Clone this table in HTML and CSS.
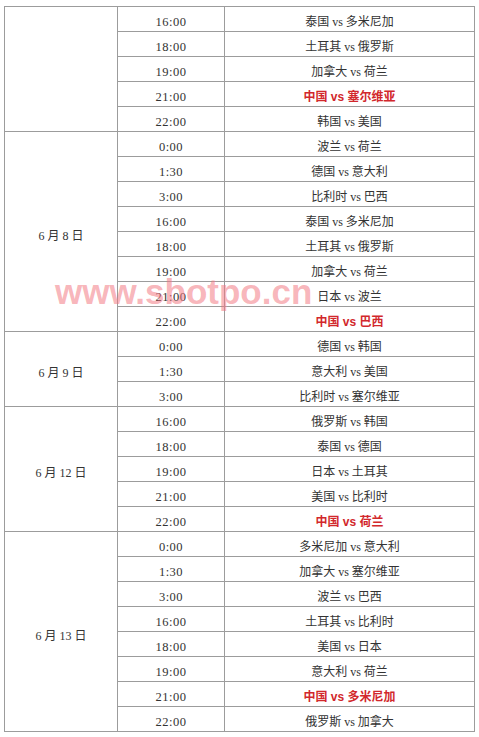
FILE: index.html
```html
<!DOCTYPE html>
<html lang="zh">
<head>
<meta charset="utf-8">
<link rel="stylesheet" href="styles.css">
</head>
<body>
<div class="wrap">
<table class="sched">
<colgroup><col class="c-date"><col class="c-time"><col class="c-match"></colgroup>
<tbody>
<tr><td class="date" rowspan="5"></td><td class="time">16:00</td><td class="match">泰国 vs 多米尼加</td></tr>
<tr><td class="time">18:00</td><td class="match">土耳其 vs 俄罗斯</td></tr>
<tr><td class="time">19:00</td><td class="match">加拿大 vs 荷兰</td></tr>
<tr><td class="time">21:00</td><td class="match hl">中国 vs 塞尔维亚</td></tr>
<tr><td class="time">22:00</td><td class="match">韩国 vs 美国</td></tr>

<tr><td class="date" rowspan="8">6 月 8 日</td><td class="time">0:00</td><td class="match">波兰 vs 荷兰</td></tr>
<tr><td class="time">1:30</td><td class="match">德国 vs 意大利</td></tr>
<tr><td class="time">3:00</td><td class="match">比利时 vs 巴西</td></tr>
<tr><td class="time">16:00</td><td class="match">泰国 vs 多米尼加</td></tr>
<tr><td class="time">18:00</td><td class="match">土耳其 vs 俄罗斯</td></tr>
<tr><td class="time">19:00</td><td class="match">加拿大 vs 荷兰</td></tr>
<tr><td class="time">21:00</td><td class="match">日本 vs 波兰</td></tr>
<tr><td class="time">22:00</td><td class="match hl">中国 vs 巴西</td></tr>

<tr><td class="date" rowspan="3">6 月 9 日</td><td class="time">0:00</td><td class="match">德国 vs 韩国</td></tr>
<tr><td class="time">1:30</td><td class="match">意大利 vs 美国</td></tr>
<tr><td class="time">3:00</td><td class="match">比利时 vs 塞尔维亚</td></tr>

<tr><td class="date" rowspan="5">6 月 12 日</td><td class="time">16:00</td><td class="match">俄罗斯 vs 韩国</td></tr>
<tr><td class="time">18:00</td><td class="match">泰国 vs 德国</td></tr>
<tr><td class="time">19:00</td><td class="match">日本 vs 土耳其</td></tr>
<tr><td class="time">21:00</td><td class="match">美国 vs 比利时</td></tr>
<tr><td class="time">22:00</td><td class="match hl">中国 vs 荷兰</td></tr>

<tr><td class="date" rowspan="8">6 月 13 日</td><td class="time">0:00</td><td class="match">多米尼加 vs 意大利</td></tr>
<tr><td class="time">1:30</td><td class="match">加拿大 vs 塞尔维亚</td></tr>
<tr><td class="time">3:00</td><td class="match">波兰 vs 巴西</td></tr>
<tr><td class="time">16:00</td><td class="match">土耳其 vs 比利时</td></tr>
<tr><td class="time">18:00</td><td class="match">美国 vs 日本</td></tr>
<tr><td class="time">19:00</td><td class="match">意大利 vs 荷兰</td></tr>
<tr><td class="time">21:00</td><td class="match hl">中国 vs 多米尼加</td></tr>
<tr><td class="time">22:00</td><td class="match">俄罗斯 vs 加拿大</td></tr>
</tbody>
</table>
<div class="watermark">www.sbotpo.cn</div>
</div>
</body>
</html>
```
FILE: styles.css
```css
html, body {
  margin: 0;
  padding: 0;
  background: #ffffff;
}
.wrap {
  position: relative;
  padding: 6px 0 0 4px;
}
.sched {
  border-collapse: collapse;
  width: 470px;
  table-layout: fixed;
  font-family: "Liberation Serif", "Noto Sans CJK SC", serif;
  font-size: 12px;
  color: #333333;
}
.c-date { width: 113px; }
.c-time { width: 107px; }
.c-match { width: 250px; }
.sched td {
  border: 1px solid #9c9c9c;
  height: 25px;
  padding: 6px 0 0 0;
  box-sizing: border-box;
  text-align: center;
  vertical-align: middle;
  line-height: 18px;
}
.sched td.date {
  padding-top: 8px;
}
.time {
  font-size: 12.5px;
  letter-spacing: 0.5px;
}
.match.hl {
  color: #d2282c;
  font-weight: bold;
  font-family: "Liberation Sans", "Noto Sans CJK SC", sans-serif;
}
.watermark {
  position: absolute;
  left: 55px;
  top: 272px;
  font-family: "Liberation Sans", sans-serif;
  font-size: 35px;
  font-weight: bold;
  color: rgba(242, 120, 130, 0.55);
  pointer-events: none;
}
```
